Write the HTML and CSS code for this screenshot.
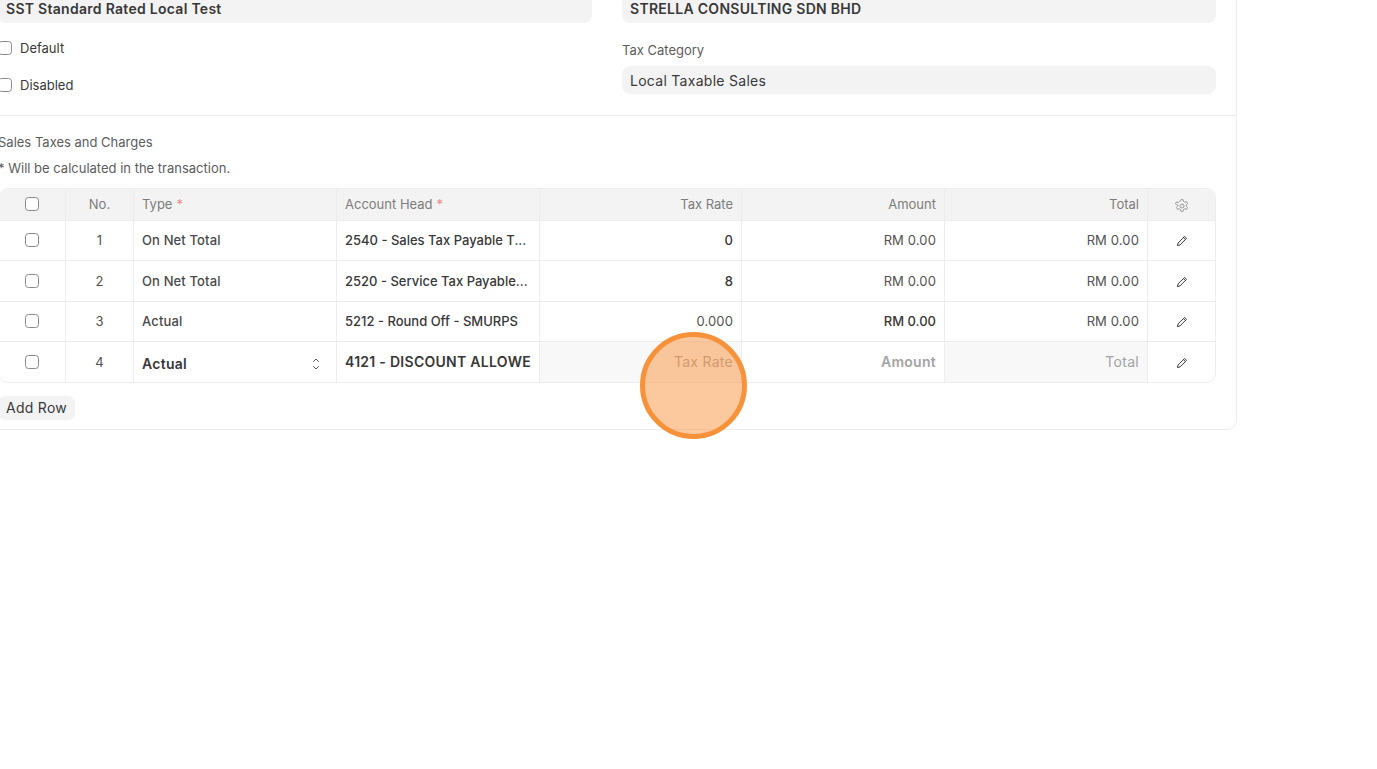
FILE: index.html
```html
<!DOCTYPE html>
<html lang="en">
<head>
<meta charset="UTF-8">
<meta name="viewport" content="width=device-width, initial-scale=1.0">
<title>Sales Taxes and Charges Template</title>
<link rel="stylesheet" href="styles.css">
</head>
<body>
<div class="form-card">
  <div class="form-section top-section">
    <div class="form-column">
      <div class="field-value strong">SST Standard Rated Local Test</div>
      <label class="check-row first"><span class="check"></span>Default</label>
      <label class="check-row"><span class="check"></span>Disabled</label>
    </div>
    <div class="form-column">
      <div class="field-value strong">STRELLA CONSULTING SDN BHD</div>
      <div class="field-label">Tax Category</div>
      <div class="field-value">Local Taxable Sales</div>
    </div>
  </div>

  <div class="form-section table-section">
    <div class="grid-title">Sales Taxes and Charges</div>
    <div class="grid-note">* Will be calculated in the transaction.</div>

    <div class="grid">
      <div class="grid-row grid-head">
        <div class="cell center"><span class="check"></span></div>
        <div class="cell center">No.</div>
        <div class="cell">Type <i class="req">*</i></div>
        <div class="cell">Account Head <i class="req">*</i></div>
        <div class="cell right">Tax Rate</div>
        <div class="cell right">Amount</div>
        <div class="cell right">Total</div>
        <div class="cell center">
          <svg class="icon" viewBox="0 0 16 16" fill="none" stroke="#999" stroke-width="1">
            <circle cx="8" cy="8" r="2"/>
            <path d="M6.900 1.700h2.200l.4 1.800 1.200.7 1.800-.6 1.100 1.900-1.400 1.300v1.400l1.400 1.300-1.100 1.900-1.800-.6-1.200.7-.4 1.800H6.900l-.4-1.800-1.200-.7-1.800.6-1.100-1.900 1.400-1.300V7.100L1.400 5.800l1.100-1.900 1.800.6 1.200-.7z" stroke-linejoin="round"/>
          </svg>
        </div>
      </div>

      <div class="grid-row">
        <div class="cell center"><span class="check"></span></div>
        <div class="cell center num">1</div>
        <div class="cell medium">On Net Total</div>
        <div class="cell medium dark">2540 - Sales Tax Payable T...</div>
        <div class="cell right medium dark">0</div>
        <div class="cell right num">RM 0.00</div>
        <div class="cell right num">RM 0.00</div>
        <div class="cell center"><svg class="icon pen" viewBox="0 0 16 16" fill="none" stroke="#333" stroke-width="1.100" stroke-linejoin="round"><path d="M11 2.800l2.200 2.200-7.500 7.500-2.900.7.700-2.900zM9.700 4.100l2.200 2.200"/></svg></div>
      </div>

      <div class="grid-row">
        <div class="cell center"><span class="check"></span></div>
        <div class="cell center num">2</div>
        <div class="cell medium">On Net Total</div>
        <div class="cell medium dark">2520 - Service Tax Payable...</div>
        <div class="cell right medium dark">8</div>
        <div class="cell right num">RM 0.00</div>
        <div class="cell right num">RM 0.00</div>
        <div class="cell center"><svg class="icon pen" viewBox="0 0 16 16" fill="none" stroke="#333" stroke-width="1.100" stroke-linejoin="round"><path d="M11 2.800l2.200 2.200-7.500 7.500-2.900.7.700-2.900zM9.700 4.100l2.200 2.200"/></svg></div>
      </div>

      <div class="grid-row">
        <div class="cell center"><span class="check"></span></div>
        <div class="cell center num">3</div>
        <div class="cell medium">Actual</div>
        <div class="cell medium dark">5212 - Round Off - SMURPS</div>
        <div class="cell right num">0.000</div>
        <div class="cell right medium dark">RM 0.00</div>
        <div class="cell right num">RM 0.00</div>
        <div class="cell center"><svg class="icon pen" viewBox="0 0 16 16" fill="none" stroke="#333" stroke-width="1.100" stroke-linejoin="round"><path d="M11 2.800l2.200 2.200-7.500 7.500-2.900.7.700-2.900zM9.700 4.100l2.200 2.200"/></svg></div>
      </div>

      <div class="grid-row edit-row">
        <div class="cell center"><span class="check"></span></div>
        <div class="cell center num">4</div>
        <div class="cell edit-select">Actual
          <svg class="updown" viewBox="0 0 8 14" fill="none" stroke="#555" stroke-width="1" stroke-linecap="round" stroke-linejoin="round"><path d="M1.500 4.500L4 2 6.500 4.500M1.500 9.500L4 12 6.500 9.500"/></svg>
        </div>
        <div class="cell edit-input">4121 - DISCOUNT ALLOWE</div>
        <div class="cell right placeholder shaded">Tax Rate</div>
        <div class="cell right placeholder bold">Amount</div>
        <div class="cell right placeholder shaded">Total</div>
        <div class="cell center"><svg class="icon pen" viewBox="0 0 16 16" fill="none" stroke="#333" stroke-width="1.100" stroke-linejoin="round"><path d="M11 2.800l2.200 2.200-7.500 7.500-2.900.7.700-2.900zM9.700 4.100l2.200 2.200"/></svg></div>
      </div>
    </div>

    <button class="add-row">Add Row</button>
  </div>
</div>

<div class="click-marker"></div>
</body>
</html>
```

FILE: styles.css
```css
html, body {
  margin: 0;
  height: 100%;
  overflow: hidden;
  background-color: #fff;
  font-family: Inter, "Liberation Sans", sans-serif;
  color: #383838;
}

.form-card {
  width: 1260px;
  margin: -5px 0 0 -23px;
  border: 1px solid #ededed;
  border-top: 0;
  border-radius: 0 0 10px 10px;
  box-sizing: border-box;
}

.form-section {
  padding: 0 20px;
}

.top-section {
  display: flex;
  gap: 30px;
  height: 121px;
  box-sizing: border-box;
  border-bottom: 1px solid #ededed;
}

.form-column {
  flex: 1;
  min-width: 0;
}

.field-value {
  height: 28px;
  line-height: 29px;
  padding: 0 8px;
  background-color: #f3f3f3;
  border-radius: 8px;
  font-size: 14px;
  letter-spacing: 0.02em;
  color: #383838;
}

.field-value.strong {
  font-weight: 600;
  line-height: 28px;
}

.field-label {
  margin: 20px 0 8px;
  font-size: 13px;
  line-height: 15px;
  color: #5c5c5c;
}

.check {
  display: inline-block;
  width: 12px;
  height: 12px;
  border: 1px solid #8a8a8a;
  border-radius: 3.5px;
  background-color: #fff;
}

.check-row {
  display: flex;
  align-items: center;
  gap: 8px;
  height: 16px;
  margin-top: 21px;
  font-size: 13px;
  color: #383838;
}

.check-row.first {
  margin-top: 17px;
}

.table-section {
  padding-top: 18px;
  padding-bottom: 9px;
}

.grid-title,
.grid-note {
  font-size: 13px;
  line-height: 16px;
  color: #5c5c5c;
}

.grid-note {
  margin-top: 10px;
}

.grid {
  width: 1218px;
  margin-top: 12px;
  border: 1px solid #ededed;
  border-radius: 10px;
  box-sizing: border-box;
  overflow: hidden;
}

.grid-row {
  display: grid;
  grid-template-columns: 67px 68px 203px 203px 202px 203px 203px 67px;
  height: 40.500px;
  border-bottom: 1px solid #ededed;
  box-sizing: border-box;
  font-size: 13px;
}

.grid-row:last-child {
  border-bottom: 0;
  height: 40px;
}

.grid-head {
  height: 31.500px;
  background-color: #f3f3f3;
  color: #7c7c7c;
}

.cell {
  display: flex;
  align-items: center;
  padding: 0 8px;
  border-right: 1px solid #ededed;
  box-sizing: border-box;
  white-space: nowrap;
  overflow: hidden;
}

.cell:last-child {
  border-right: 0;
  padding-top: 2px;
}

.grid-head .cell:last-child {
  padding-top: 3px;
}

.cell.center {
  justify-content: center;
}

.cell.right {
  justify-content: flex-end;
}

.req {
  margin-left: 4px;
  font-style: normal;
  color: #e88b8b;
}

.num {
  color: #525252;
  letter-spacing: 0.01em;
}

.medium {
  font-weight: 500;
  color: #4a4a4a;
  letter-spacing: 0.01em;
}

.medium.dark {
  color: #383838;
  letter-spacing: 0;
}

.icon {
  width: 16px;
  height: 16px;
  display: block;
}

.icon.pen {
  width: 14px;
  height: 14px;
}

.edit-select {
  justify-content: space-between;
  padding-right: 16px;
  padding-top: 3px;
  font-size: 14px;
  font-weight: 600;
  letter-spacing: 0.02em;
}

.updown {
  width: 8px;
  height: 14px;
}

.edit-input {
  padding-bottom: 1px;
  font-size: 14px;
  font-weight: 600;
  letter-spacing: 0.02em;
}

.placeholder {
  padding-bottom: 1px;
  font-size: 14px;
  letter-spacing: 0.02em;
  color: #a3a3a3;
}

.placeholder.bold {
  font-weight: 600;
}

.shaded {
  background-color: #f8f8f8;
}

.add-row {
  display: block;
  margin-top: 13px;
  height: 24px;
  padding: 0 8px 2px;
  border: 0;
  border-radius: 7px;
  background-color: #f3f3f3;
  font-family: inherit;
  font-size: 14px;
  letter-spacing: 0.02em;
  color: #383838;
}

.click-marker {
  position: absolute;
  left: 640px;
  top: 332px;
  width: 107px;
  height: 107px;
  box-sizing: border-box;
  border: 5px solid #f8923a;
  border-radius: 50%;
  background-color: rgba(250, 146, 60, 0.5);
}
```
